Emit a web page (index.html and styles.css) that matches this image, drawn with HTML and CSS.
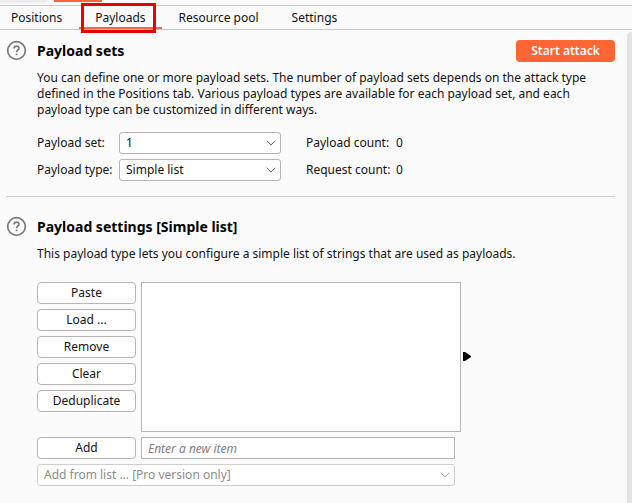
FILE: index.html
```html
<!DOCTYPE html>
<html lang="en">
<head>
<meta charset="utf-8">
<title>Payloads</title>
<link rel="stylesheet" href="styles.css">
</head>
<body>
<div class="attack-tabs"><span class="attack-tab"></span><span class="attack-tab attack-tab-active"></span></div>
<nav class="tabs">
  <a class="tab" href="#positions">Positions</a>
  <a class="tab tab-active" href="#payloads">Payloads<span class="highlight"></span></a>
  <a class="tab" href="#resource-pool">Resource pool</a>
  <a class="tab" href="#settings">Settings</a>
</nav>
<div class="workspace">
  <main class="content">
    <section class="section">
      <button class="help" type="button" aria-label="Help: payload sets">
        <svg width="21" height="21" viewBox="0 0 21 21" fill="none" stroke="#7b7b7b" stroke-width="1.7"><circle cx="10.5" cy="10.5" r="8.8"/><path d="M8 8.500c0-1.400 1-2.400 2.500-2.400s2.500.9 2.500 2.200c0 1.700-2.400 1.900-2.400 3.600v.3"/><path d="M10.600 13.500v1.700"/></svg>
      </button>
      <div class="body">
        <header class="heading">
          <h2>Payload sets</h2>
          <button class="start" type="button">Start attack</button>
        </header>
        <p class="about">You can define one or more payload sets. The number of payload sets depends on the attack type defined in the Positions tab. Various payload types are available for each payload set, and each payload type can be customized in different ways.</p>
        <div class="fields">
          <label for="payload-set">Payload set:</label>
          <div class="picker">
            <select id="payload-set"><option>1</option></select>
            <svg class="chevron" width="10" height="6" viewBox="0 0 10 6"><path d="M.7.7 5 5 9.300.7"/></svg>
          </div>
          <span class="count">Payload count:</span><span>0</span>
          <label for="payload-type">Payload type:</label>
          <div class="picker">
            <select id="payload-type"><option>Simple list</option></select>
            <svg class="chevron" width="10" height="6" viewBox="0 0 10 6"><path d="M.7.7 5 5 9.300.7"/></svg>
          </div>
          <span class="count">Request count:</span><span>0</span>
        </div>
      </div>
    </section>
    <hr class="divider">
    <section class="section">
      <button class="help" type="button" aria-label="Help: payload settings">
        <svg width="21" height="21" viewBox="0 0 21 21" fill="none" stroke="#7b7b7b" stroke-width="1.7"><circle cx="10.5" cy="10.5" r="8.8"/><path d="M8 8.500c0-1.400 1-2.400 2.500-2.400s2.500.9 2.500 2.200c0 1.700-2.400 1.900-2.400 3.600v.3"/><path d="M10.600 13.500v1.700"/></svg>
      </button>
      <div class="body">
        <header class="heading">
          <h2>Payload settings [Simple list]</h2>
        </header>
        <p class="about">This payload type lets you configure a simple list of strings that are used as payloads.</p>
        <div class="editor">
          <div class="actions">
            <button class="action" type="button">Paste</button>
            <button class="action" type="button">Load ...</button>
            <button class="action" type="button">Remove</button>
            <button class="action" type="button">Clear</button>
            <button class="action" type="button">Deduplicate</button>
          </div>
          <div class="list-area">
            <textarea class="list" aria-label="Payload list"></textarea>
            <svg class="marker" width="8" height="10" viewBox="0 0 8 10"><path d="M0 0h2l6 4v1L2 9H0z"/></svg>
          </div>
          <button class="action" type="button">Add</button>
          <input class="new-item" type="text" placeholder="Enter a new item" aria-label="New item">
          <div class="picker preset">
            <select disabled aria-label="Add from list"><option>Add from list ... [Pro version only]</option></select>
            <svg class="chevron" width="10" height="6" viewBox="0 0 10 6"><path d="M.7.7 5 5 9.300.7"/></svg>
          </div>
        </div>
      </div>
    </section>
  </main>
  <div class="scrollbar"></div>
</div>
</body>
</html>
```
FILE: styles.css
```css
* {
  box-sizing: border-box;
}

html,
body {
  height: 100%;
  margin: 0;
}

body {
  display: flex;
  flex-direction: column;
  overflow: hidden;
  background: #fbfbfb;
  color: #111;
  font-family: "Noto Sans", sans-serif;
  font-size: 12px;
  line-height: 16px;
}

button,
input,
select,
textarea {
  margin: 0;
  font: inherit;
  color: inherit;
}

.attack-tabs {
  display: flex;
  gap: 6px;
  height: 5px;
  align-items: flex-start;
}

.attack-tab {
  width: 48px;
  height: 3px;
  background: #ececec;
  border-radius: 0 0 3px 0;
}

.attack-tab-active {
  height: 2px;
  background: #ff6633;
  border-radius: 0;
}

.tabs {
  display: flex;
  flex: none;
  gap: 1px;
  height: 25px;
  padding-right: 8px;
  border-top: 1px solid #c8c8c8;
  border-bottom: 1px solid #c8c8c8;
}

.tab {
  position: relative;
  padding: 4px 16px 0;
  color: inherit;
  text-decoration: none;
}

.tab:first-child {
  padding-left: 11px;
}

.tab-active {
  border-bottom: 2px solid #ff6633;
}

.highlight {
  position: absolute;
  top: -3px;
  left: 2px;
  width: 75px;
  height: 30px;
  border: 3px solid #e60000;
}

.workspace {
  display: flex;
  flex: 1;
  min-height: 0;
}

.content {
  flex: 1;
  padding: 9px 12px 0 6px;
}

.section {
  display: flex;
  gap: 10px;
}

.help {
  flex: none;
  width: 21px;
  height: 21px;
  margin-top: 1px;
  padding: 0;
  border: 0;
  background: none;
}

.help svg {
  display: block;
}

.body {
  flex: 1;
}

.heading {
  display: flex;
  justify-content: space-between;
  align-items: center;
  height: 24px;
}

h2 {
  margin: 0;
  color: #000;
  font-size: 14px;
  line-height: 20px;
}

.start {
  width: 99px;
  height: 22px;
  padding: 0;
  border: 0;
  border-radius: 4px;
  background: #ff6633;
  color: #fff;
  font-weight: 600;
}

.about {
  margin: 7px 0 14px;
}

.fields {
  display: grid;
  grid-template-columns: 82px 162px 115px auto;
  grid-auto-rows: 22px;
  row-gap: 5px;
  align-items: center;
}

.count {
  padding-left: 25px;
}

.picker {
  position: relative;
}

.picker select {
  display: block;
  width: 100%;
  height: 22px;
  padding: 0 24px 0 6px;
  appearance: none;
  border: 1px solid #b9b4b4;
  border-radius: 3px;
  background: #fff;
}

.picker select:disabled {
  border-color: #cfcfcf;
  color: #8c8c8c;
  opacity: 1;
}

.chevron {
  position: absolute;
  top: 8px;
  right: 5px;
  fill: none;
  stroke: #6e6e6e;
  pointer-events: none;
}

.preset .chevron {
  stroke: #aaa;
}

.divider {
  width: 100%;
  height: 1px;
  margin: 15px 0 18px;
  border: 0;
  background: #cdcdcd;
}

.editor {
  display: grid;
  grid-template-columns: 99px 314px;
  gap: 5px;
  margin-top: 20px;
}

.actions {
  display: flex;
  flex-direction: column;
  gap: 5px;
}

.action {
  height: 22px;
  padding: 0;
  border: 1px solid #b9b4b4;
  border-radius: 4px;
  background: #fff;
}

.list-area {
  display: flex;
  align-items: center;
  gap: 2px;
}

.list {
  flex: none;
  width: 320px;
  height: 150px;
  border: 1px solid #b9b4b4;
  background: #fff;
  resize: none;
}

.marker {
  flex: none;
}

.new-item {
  height: 22px;
  padding: 0 6px;
  border: 1px solid #b9b4b4;
  background: #fff;
}

.new-item::placeholder {
  color: #808080;
  font-style: italic;
  opacity: 1;
}

.preset {
  grid-column: 1 / -1;
}

.scrollbar {
  flex: none;
  width: 5px;
  margin-top: 2px;
  border-radius: 4px 0 0 0;
  background: #e4e4e4;
}
```
